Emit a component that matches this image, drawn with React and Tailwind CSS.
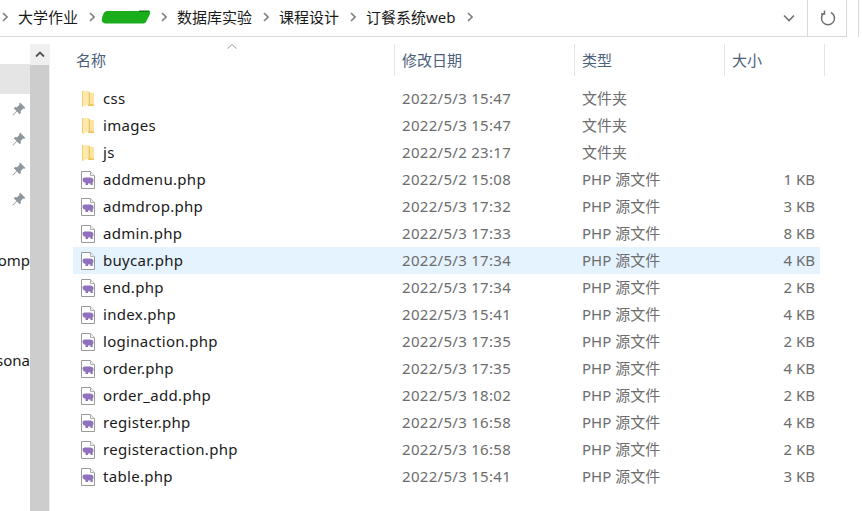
import React from 'react';

const FONT = "font-['Noto_Sans','Noto_Sans_CJK_SC',sans-serif]";

const files = [
    { name: 'css', date: '2022/5/3 15:47', type: '文件夹', folder: true },
    { name: 'images', date: '2022/5/3 15:47', type: '文件夹', folder: true },
    { name: 'js', date: '2022/5/2 23:17', type: '文件夹', folder: true },
    { name: 'addmenu.php', date: '2022/5/2 15:08', type: 'PHP 源文件', size: '1 KB' },
    { name: 'admdrop.php', date: '2022/5/3 17:32', type: 'PHP 源文件', size: '3 KB' },
    { name: 'admin.php', date: '2022/5/3 17:33', type: 'PHP 源文件', size: '8 KB' },
    { name: 'buycar.php', date: '2022/5/3 17:34', type: 'PHP 源文件', size: '4 KB', selected: true },
    { name: 'end.php', date: '2022/5/3 17:34', type: 'PHP 源文件', size: '2 KB' },
    { name: 'index.php', date: '2022/5/3 15:41', type: 'PHP 源文件', size: '4 KB' },
    { name: 'loginaction.php', date: '2022/5/3 17:35', type: 'PHP 源文件', size: '2 KB' },
    { name: 'order.php', date: '2022/5/3 17:35', type: 'PHP 源文件', size: '4 KB' },
    { name: 'order_add.php', date: '2022/5/3 18:02', type: 'PHP 源文件', size: '2 KB' },
    { name: 'register.php', date: '2022/5/3 16:58', type: 'PHP 源文件', size: '4 KB' },
    { name: 'registeraction.php', date: '2022/5/3 16:58', type: 'PHP 源文件', size: '2 KB' },
    { name: 'table.php', date: '2022/5/3 15:41', type: 'PHP 源文件', size: '3 KB' },
];

const crumbs = ['大学作业', null, '数据库实验', '课程设计', '订餐系统web'];

function Chevron() {
    return (
        <svg width="6" height="10" viewBox="0 0 6 10" className="shrink-0">
            <path d="M1 1l4 4-4 4" fill="none" stroke="#808080" strokeWidth="1.6" />
        </svg>
    );
}

function FolderIcon() {
    return (
        <svg width="14" height="18" viewBox="0 0 14 18">
            {/* back panel */}
            <path d="M8 3h5v12H8z" fill="#fbe3a0" />
            {/* front flap */}
            <path d="M1 1h6.500v13.500L1.500 17z" fill="#fce9ae" />
            <path d="M1 1h1v16h-.5L1 16z" fill="#f2cf73" />
            <path d="M7.500 1.500l1.500.5v12l4 .5V16H7v-1.500h.5z" fill="#efc55f" />
        </svg>
    );
}

function PhpIcon() {
    return (
        <svg width="14" height="18" viewBox="0 0 14 18">
            <path d="M.5.5h9l4 4v13H.5z" fill="#fff" stroke="#9a9a9a" />
            <path d="M9.500.5v4h4" fill="#f0f0f0" stroke="#b0b0b0" />
            <path d="M1.500 8.500C1.500 7 3 6.500 4.500 6.500H9c2 0 3.500 1 3.500 2.800 0 .8-.2 1.700-.8 2.200V14H9.500v-1.500H7V14H4.500v-2.200C3 11.800 1.500 10.500 1.500 8.500z" fill="#9071bb" />
        </svg>
    );
}

function Pin() {
    return (
        <svg width="14" height="14" viewBox="0 0 14 14">
            <path d="M8 .5l5.500 5.500-1.300.8-1-.3-2.500 2.500.2 2-1.200 1.200L5 9.500 1 13.500l-.5-.5L4.500 9 1.800 6.300 3 5.100l2 .2 2.500-2.500-.3-1z" fill="#8f979e" />
        </svg>
    );
}

function Row({ file }) {
    return (
        <div className={`flex h-[27px] items-center text-[15px] tracking-[0.3px] ${file.selected ? 'bg-[#e5f3ff]' : ''}`}>
            <div className="flex w-[30px] justify-center"><span className="flex">{file.folder ? <FolderIcon /> : <PhpIcon />}</span></div>
            <div className="w-[299px] text-[#1a1a1a]">{file.name}</div>
            <div className="w-[180px] text-[#6d6d6d]">{file.date}</div>
            <div className="w-[150px] text-[#6d6d6d] tracking-normal">{file.type}</div>
            <div className="w-[83px] text-right text-[#6d6d6d] tracking-normal">{file.size}</div>
        </div>
    );
}

function HeaderCell({ label, width }) {
    return (
        <div className={`h-full border-r border-[#e5e5e5] text-[15px] leading-[32px] text-[#4c607a] ${width}`}>{label}</div>
    );
}

export default function App() {
    return (
        <div className={`flex h-[511px] w-[862px] flex-col overflow-hidden bg-white ${FONT}`}>
            {/* address bar */}
            <div className="flex h-[37px] shrink-0">
                <div className="flex w-[847px] items-center border-r border-b border-[#d9d9d9]">
                    <div className="flex min-w-0 flex-1 -translate-y-px items-center gap-[10px] pl-[2px] text-[15px] text-[#1a1a1a]">
                        {crumbs.map((c, i) => (
                            <React.Fragment key={i}>
                                <Chevron />
                                {c ? (
                                    <span className="mr-[1px] whitespace-nowrap">{c}</span>
                                ) : (
                                    <svg width="50" height="14" viewBox="0 0 50 14" className="-ml-[4px] shrink-0">
                                        <path d="M6 1h39c3 0 5 .5 4 3l-4 8c-1 1.500-2 1.500-4 1.500H6c-4 0-6-1.500-5-5 .5-3 2-7.500 5-7.500z" fill="#1aae1c" />
                                        <path d="M38 .5h10.500v1.500H38z" fill="#0f7a12" />
                                    </svg>
                                )}
                            </React.Fragment>
                        ))}
                        <Chevron />
                    </div>
                    <div className="flex h-full w-[36px] items-center justify-center">
                        <svg width="12" height="8" viewBox="0 0 12 8"><path d="M1 1.500l5 5 5-5" fill="none" stroke="#707070" strokeWidth="1.600" /></svg>
                    </div>
                    <div className="flex h-full w-[39px] items-center justify-center border-l border-[#d9d9d9] pl-[2px]">
                        <svg width="16" height="16" viewBox="0 0 16 16"><path d="M5 2.500a6.500 6.500 0 1 0 6 0M4.500 .5v3.500h-3.500" fill="none" stroke="#707070" strokeWidth="1.500" /></svg>
                    </div>
                </div>
                <div className="ml-[11px] w-px border-l border-b border-[#d9d9d9]" />
            </div>

            <div className="flex min-h-0 flex-1 pt-[7px]">
                {/* clipped navigation pane */}
                <div className="relative w-[30px] shrink-0 overflow-hidden text-[15px] text-[#1a1a1a]">
                    <div className="mt-[20px] h-[30px] bg-[#e5e5e5]" />
                    <div className="mt-[8px] flex flex-col items-end gap-[16px] pr-[4px]">
                        {[0, 1, 2, 3].map((i) => <Pin key={i} />)}
                    </div>
                    <div className="absolute top-[205px] right-0 whitespace-nowrap">omp</div>
                    <div className="absolute top-[305px] right-0 whitespace-nowrap">sona</div>
                </div>
                {/* scrollbar */}
                <div className="flex w-[19px] shrink-0 flex-col bg-[#cdcdcd]">
                    <div className="flex h-[21px] items-center justify-center bg-[#f0f0f0]">
                        <svg width="10" height="7" viewBox="0 0 10 7"><path d="M1 5.500l4-4 4 4" fill="none" stroke="#555" strokeWidth="1.800" /></svg>
                    </div>
                </div>
                <div className="w-px shrink-0 bg-[#f0f0f0]" />

                {/* file list */}
                <div className="relative min-w-0 flex-1 pl-[23px]">
                    <svg width="10" height="5" viewBox="0 0 10 5" className="absolute top-0 left-[177px]"><path d="M.5 4.500l4.500-4 4.500 4" fill="none" stroke="#9a9a9a" /></svg>
                    <div className="flex h-[32px] items-center">
                        <HeaderCell label="名称" width="w-[322px] pl-[3px]" />
                        <HeaderCell label="修改日期" width="w-[180px] pl-[7px]" />
                        <HeaderCell label="类型" width="w-[150px] pl-[7px]" />
                        <HeaderCell label="大小" width="w-[100px] pl-[7px]" />
                    </div>
                    <div className="mt-[9px] w-[747px]">
                        {files.map((f) => <Row key={f.name} file={f} />)}
                    </div>
                </div>
            </div>
        </div>
    );
}
